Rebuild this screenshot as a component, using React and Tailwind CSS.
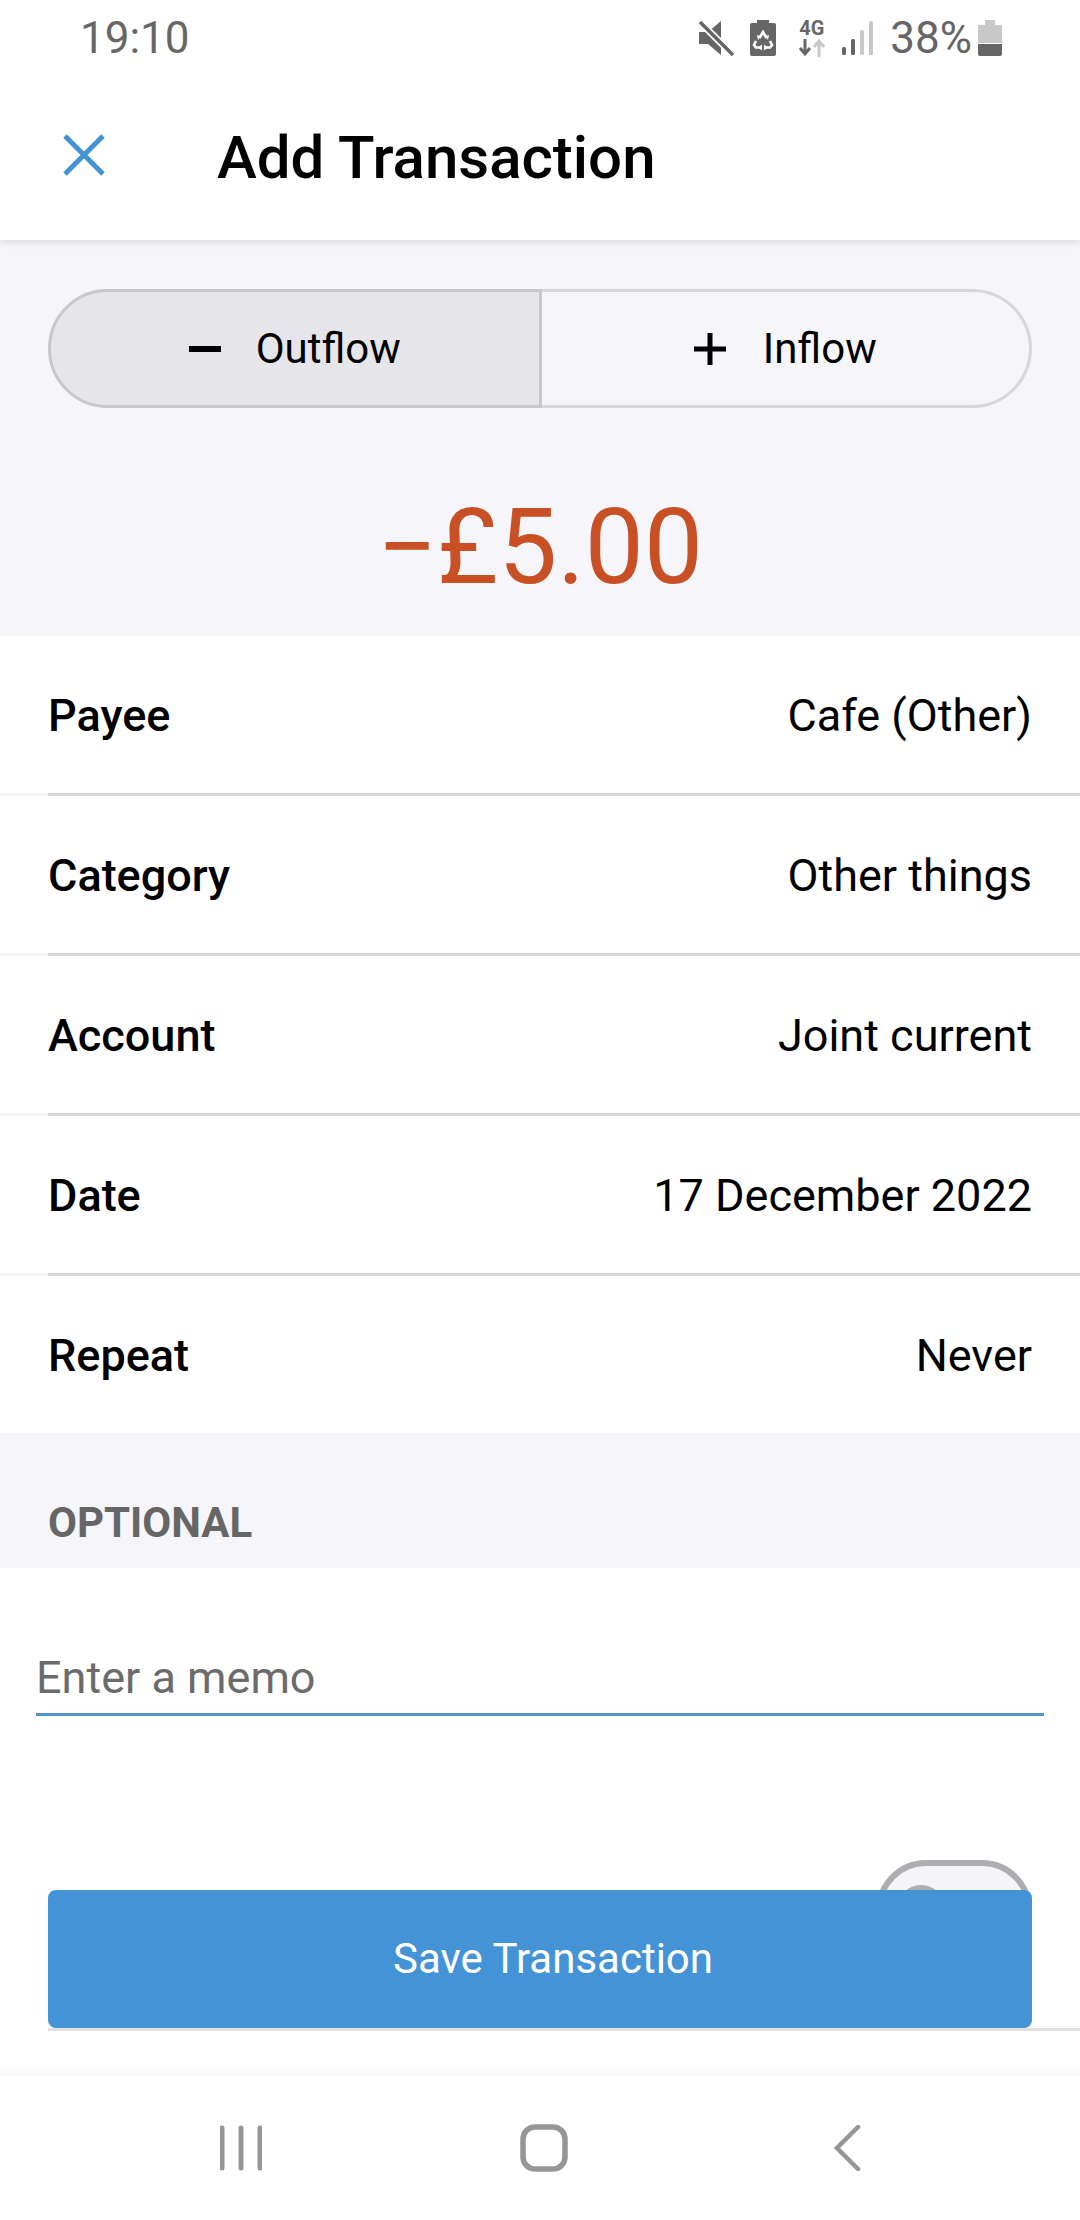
const Row = ({ label, value, last }) => (
  <div className={"pl-12 bg-white " + (last ? "" : "border-b-[3px] border-[#f5f5fa]")}>
    <div
      className={
        last
          ? "h-[157px] pt-[3px] flex items-center justify-between pr-12"
          : "h-[160px] pt-[2px] -mb-[3px] flex items-center justify-between pr-12 border-b-[3px] border-[#d5d5da]"
      }
    >
      <span className="text-[45px] font-medium text-black">{label}</span>
      <span className="text-[45px] text-black">{value}</span>
    </div>
  </div>
);

const StatusIcons = () => (
  <div className="flex items-center pr-[78px] text-[#666666]">
    {/* mute */}
    <svg width="36" height="36" viewBox="0 0 36 36" className="mr-[16px]">
      <path d="M1 12h9l13-11v34L10 24H1z" fill="#666666" />
      <path d="M2 2l33 33" stroke="#ffffff" strokeWidth="7" />
      <path d="M2 2l33 33" stroke="#666666" strokeWidth="3.5" />
    </svg>
    {/* battery saver */}
    <svg width="26" height="36" viewBox="0 0 26 36" className="mr-[22px]">
      <path d="M7 0h12v3h5a2 2 0 0 1 2 2v29a2 2 0 0 1-2 2H2a2 2 0 0 1-2-2V5a2 2 0 0 1 2-2h5z" fill="#666666" />
      <path d="M9.5 18l3.5-6 3.5 6M6 21l-2 4 2 2.5h5M20 21l2 4-2 2.5h-5" fill="none" stroke="#ffffff" strokeWidth="2.6" />
      <path d="M15 16l4-1-1 5zM11 16l-4-1 1 5zM12 24.5v6l-4-3zM14 24.5v6l4-3z" fill="#ffffff" />
    </svg>
    {/* 4G with arrows */}
    <div className="flex flex-col items-center w-[27px] mr-[17px]">
      <span className="text-[20px] leading-[16px] font-bold">4G</span>
      <svg width="27" height="18" viewBox="0 0 27 18" className="mt-[3px]">
        <path d="M7 0v14M2 9l5 6 5-6" fill="none" stroke="#666666" strokeWidth="3" />
        <path d="M21 18V3M16 8l5-6 5 6" fill="none" stroke="#c8c8c8" strokeWidth="3" />
      </svg>
    </div>
    {/* signal */}
    <svg width="31" height="34" viewBox="0 0 31 34" className="mr-[17px]">
      <rect x="0" y="26" width="4" height="8" rx="1.5" fill="#666666" />
      <rect x="9" y="18" width="4" height="16" rx="1.5" fill="#666666" />
      <rect x="18" y="9" width="4" height="25" rx="1.5" fill="#c8c8c8" />
      <rect x="27" y="0" width="4" height="34" rx="1.5" fill="#c8c8c8" />
    </svg>
    <span className="text-[44px] leading-none mr-[6px]">38%</span>
    {/* battery */}
    <svg width="24" height="36" viewBox="0 0 24 36">
      <path d="M7 0h10v5H7zM0 5h24v18H0z" fill="#c8c8c8" />
      <path d="M0 24h24v10a2 2 0 0 1-2 2H2a2 2 0 0 1-2-2z" fill="#666666" />
    </svg>
  </div>
);

export default function App() {
  return (
    <div className="relative w-[1080px] h-[2220px] bg-white overflow-hidden flex flex-col font-['Roboto',sans-serif]">
      {/* status bar */}
      <div className="relative z-20 bg-white flex items-center justify-between h-[70px] pt-[6px] pl-[80px]">
        <span className="text-[44px] leading-none text-[#666666]">19:10</span>
        <StatusIcons />
      </div>

      {/* header */}
      <div className="relative z-10 flex items-center h-[170px] pl-[63px] bg-white shadow-[0_2px_8px_rgba(0,0,0,0.12)]">
        <svg width="42" height="42" viewBox="0 0 42 42" className="mr-[112px]">
          <path d="M2 2l38 38M40 2L2 40" stroke="#4493d7" strokeWidth="5" fill="none" />
        </svg>
        <h1 className="text-[60px] font-medium text-black mt-[6px]">Add Transaction</h1>
      </div>

      {/* outflow / inflow */}
      <div className="bg-[#f5f5fa] h-[396px] px-12 pt-[49px]">
        <div className="flex h-[119px] text-[42px] text-black">
          <div className="flex-1 flex items-center justify-center bg-[#e5e5ea] border-[3px] border-[#c7c7cc] rounded-l-[60px]">
            <span className="w-[32px] h-[6px] bg-black mr-[35px]" />
            <span>Outflow</span>
          </div>
          <div className="flex-1 flex items-center justify-center border-[3px] border-l-0 border-[#d6d6db] rounded-r-[60px]">
            <svg width="32" height="32" viewBox="0 0 32 32" className="mr-[37px]">
              <path d="M16 0v32M0 16h32" stroke="#000000" strokeWidth="5" />
            </svg>
            <span>Inflow</span>
          </div>
        </div>
        <div className="text-center text-[105px] leading-none text-[#c94f24] mt-[87px]">−£5.00</div>
      </div>

      {/* fields */}
      <Row label="Payee" value="Cafe (Other)" />
      <Row label="Category" value="Other things" />
      <Row label="Account" value="Joint current" />
      <Row label="Date" value="17 December 2022" />
      <Row label="Repeat" value="Never" last />

      {/* optional */}
      <div className="bg-[#f5f5fa] h-[135px] px-12 flex items-end pb-[24px]">
        <span className="text-[42px] font-bold text-[#666666] leading-none">OPTIONAL</span>
      </div>

      {/* memo */}
      <div className="px-9 pt-[81px]">
        <div className="text-[45px] leading-[58px] pb-[6px] text-[#6b6b6b] border-b-[3px] border-[#4f94ca]">Enter a memo</div>
      </div>

      {/* toggle row */}
      <div className="ml-12 h-[315px] pt-[144px] pr-12 flex justify-end items-start border-b-[3px] border-[#e0e0e0]">
        <div className="w-[156px] h-[100px] rounded-full border-[6px] border-[#aeadb2] bg-[#f4f4f9] flex items-center pl-[14px]">
          <span className="w-[50px] h-[50px] rounded-full bg-[#aeadb2]" />
        </div>
      </div>

      <div className="mt-auto h-[16px] bg-gradient-to-b from-white to-[#f9f9f9]" />
      {/* nav bar */}
      <div className="h-[144px] flex items-center bg-white pl-[220px]">
        <svg width="42" height="46" viewBox="0 0 42 46" className="mr-[258px]">
          <path d="M2 3v40M21 3v40M40 3v40" stroke="#969696" strokeWidth="5" strokeLinecap="round" />
        </svg>
        <svg width="48" height="48" viewBox="0 0 48 48" className="mr-[265px]">
          <rect x="3" y="3" width="42" height="42" rx="12" fill="none" stroke="#969696" strokeWidth="5.5" />
        </svg>
        <svg width="28" height="46" viewBox="0 0 28 46">
          <path d="M25 2L4 23l21 21" fill="none" stroke="#969696" strokeWidth="4.5" strokeLinecap="round" />
        </svg>
      </div>

      {/* save button floats over the form */}
      <button className="absolute left-12 right-12 top-[1890px] h-[138px] pl-[26px] pb-[2px] rounded-[8px] bg-[#4493d7] text-white text-[42px]">
        Save Transaction
      </button>
    </div>
  );
}
